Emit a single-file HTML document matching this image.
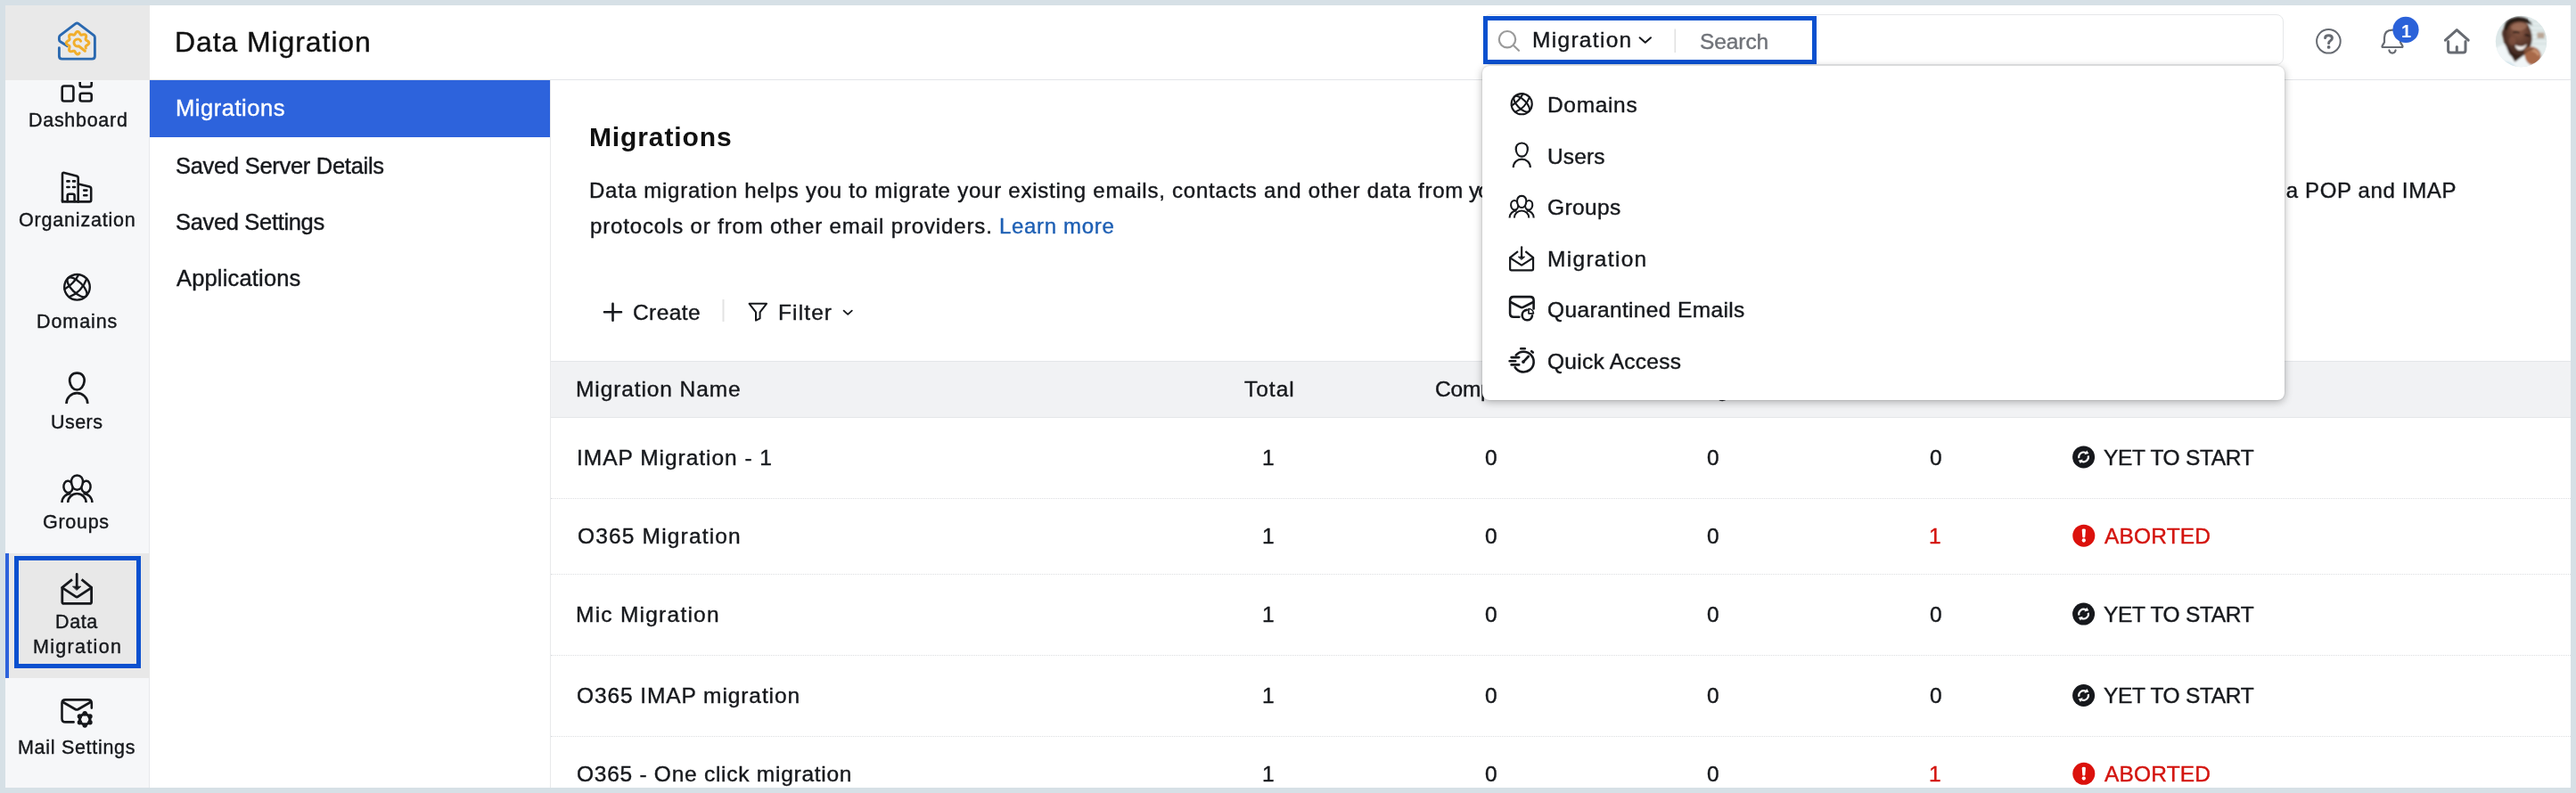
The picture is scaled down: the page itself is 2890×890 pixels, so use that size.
<!DOCTYPE html>
<html lang="en">
<head>
<meta charset="utf-8">
<title>Data Migration</title>
<style>
*{box-sizing:border-box;margin:0;padding:0}
html,body{width:2890px;height:890px;overflow:hidden;background:#fff}
body{position:relative;font-family:"Liberation Sans",sans-serif;color:#16181c}
.a{position:absolute}
.t{position:absolute;white-space:nowrap;line-height:1;will-change:transform;-webkit-text-stroke:0.4px currentColor}
.o{z-index:30}
h1,h2{font-weight:400}
a{text-decoration:none}
svg{position:absolute;overflow:hidden}
.ic{fill:none;stroke:#16181c;stroke-width:2.6;stroke-linecap:round;stroke-linejoin:round}
.fr{position:absolute;background:#d6e0e6;z-index:50}
.sep{left:618px;width:2266px;height:0;border-top:1.5px dotted #dcdee1}
</style>
</head>
<body>
<!-- main area -->
<div class="a" style="left:617px;top:90px;width:1px;height:794px;background:#e8e9eb"></div>
<div class="a" style="left:618px;top:405px;width:2266px;height:64px;background:#f1f2f4;border-top:1.5px solid #e4e6e9;border-bottom:1.5px solid #e4e6e9"></div>
<div class="a sep" style="top:558.5px"></div>
<div class="a sep" style="top:643.5px"></div>
<div class="a sep" style="top:734.5px"></div>
<div class="a sep" style="top:825.5px"></div>
<!-- sub nav -->
<div class="a" style="left:168px;top:90px;width:449px;height:64px;background:#2d63dc"></div>
<!-- header -->
<div class="a" style="left:168px;top:89px;width:2716px;height:1px;background:#e3e5e8"></div>
<div class="a" style="left:1664px;top:16px;width:898px;height:57px;border:1.5px solid #e6e7e9;border-radius:8px;background:#fff"></div>
<div class="a" style="left:1664px;top:18px;width:374px;height:53.6px;border:5.8px solid #0a50cf;background:#fff"></div>
<!-- rail -->
<div class="a" style="left:6px;top:90px;width:162px;height:794px;background:#f6f7f9;border-right:1px solid #e7e9ec"></div>
<div class="a" style="left:6px;top:6px;width:162px;height:84px;background:#e9e9e9"></div>
<div class="a" style="left:6px;top:621px;width:162px;height:140px;background:#e8e8e8"></div>
<div class="a" style="left:6px;top:621px;width:4px;height:140px;background:#2d63dc"></div>
<div class="a" style="left:16px;top:624px;width:142px;height:125.6px;border:5.9px solid #0a50cf"></div>
<svg width="2890" height="890" viewBox="0 0 2890 890" style="left:0;top:0">
<!-- logo -->
<g fill="none" stroke-linecap="round" stroke-linejoin="round">
<path d="M66.4 53.8 V63 Q66.4 66.1 69.5 66.1 H103.3 Q106.4 66.1 106.4 63 V42.2 Q106.4 40.6 105.2 39.7 L88.1 26.7 Q86.4 25.4 84.7 26.7 L67.6 39.7 Q66.4 40.6 66.4 42.2 V44.6 Q66.4 46 67.7 46.8 L75.4 51.6" stroke="#2a69b0" stroke-width="2.9"/>
<path d="M89.11 59.58 L88.65 60.14 L88.14 60.59 L87.59 60.87 L87.01 60.95 L86.44 60.81 L85.90 60.47 L85.40 59.98 L84.97 59.39 L84.58 58.78 L84.23 58.20 L83.89 57.73 L83.53 57.41 L83.12 57.23 L82.63 57.21 L82.05 57.30 L81.40 57.46 L80.70 57.62 L79.97 57.73 L79.27 57.73 L78.65 57.58 L78.15 57.28 L77.79 56.82 L77.60 56.23 L77.56 55.55 L77.64 54.83 L77.79 54.11 L77.95 53.44 L78.07 52.84 L78.09 52.33 L77.96 51.89 L77.68 51.52 L77.25 51.17 L76.71 50.83 L76.10 50.46 L75.50 50.04 L74.97 49.56 L74.58 49.03 L74.37 48.47 L74.38 47.89 L74.60 47.33 L75.00 46.80 L75.54 46.33 L76.15 45.91 L76.75 45.54 L77.29 45.20 L77.71 44.86 L77.98 44.48 L78.09 44.04 L78.07 43.52 L77.94 42.91 L77.78 42.24 L77.63 41.52 L77.56 40.80 L77.61 40.12 L77.82 39.54 L78.18 39.09 L78.70 38.80 L79.33 38.67 L80.03 38.68 L80.75 38.79 L81.46 38.95 L82.10 39.11 L82.67 39.19 L83.15 39.16 L83.56 38.97 L83.92 38.63 L84.26 38.15 L84.61 37.58 L85.00 36.96 L85.44 36.38 L85.94 35.90 L86.48 35.57 L87.06 35.45 L87.63 35.54 L88.18 35.84 L88.69 36.30 L89.14 36.87 L89.53 37.48 L89.89 38.07 L90.23 38.57 L90.58 38.93 L90.98 39.14 L91.45 39.20 L92.01 39.13 L92.64 38.98 L93.34 38.81 L94.06 38.69 L94.77 38.66 L95.41 38.77 L95.95 39.04 L96.34 39.46 L96.57 40.03 L96.64 40.69 L96.59 41.41 L96.45 42.13 L96.28 42.81 L96.15 43.43 L96.10 43.96 L96.19 44.41 L96.44 44.80 L96.84 45.15 L97.36 45.49 L97.96 45.85 L98.57 46.26 L99.12 46.72 L99.55 47.24 L99.80 47.80 L99.84 48.38 L99.67 48.95 L99.30 49.48 L98.79 49.97 L98.19 50.40 L97.58 50.77 L97.02 51.12 L96.57 51.46 L96.27 51.83 L96.12 52.25 L96.12 52.76 L96.22 53.34 L96.39 54.00" stroke="#f1ae2b" stroke-width="3"/>
<path d="M90.6 46.2 A4 4 0 1 0 88.4 51.7 L95.4 57.2" stroke="#f1ae2b" stroke-width="3"/>
</g>
<!-- dashboard (clipped) -->
<g class="ic" stroke-width="3" clip-path="url(#cl1)">
<rect x="69.7" y="96.5" width="12.7" height="17" rx="2.3"/>
<rect x="89.7" y="104.8" width="13" height="8.7" rx="2.3"/>
<rect x="89.7" y="84" width="13" height="13.5" rx="2.3"/>
</g>
<clipPath id="cl1"><rect x="60" y="92" width="60" height="30"/></clipPath>
<!-- organization -->
<g class="ic" stroke-width="2.8">
<path d="M70 226.4 V195.6 Q70 193.4 72.2 193.9 L85.8 197.4 Q87.7 197.9 87.7 199.8 V226.4"/>
<path d="M88 206.4 L100.4 209.6 Q102.2 210.1 102.2 212 V224.4 Q102.2 226.4 100.2 226.4 H72 Q70 226.4 70 224.4"/>
<path d="M75.7 226 V219.7 Q75.7 217.7 77.7 217.7 H81.6 Q83.6 217.7 83.6 219.7 V226"/>
<path d="M75.4 203.4 H77.6 M82 203.4 H84 M75.4 210 H77.6 M82 210 H84 M94.2 213.6 H97.4 M94.2 219.3 H97.4" stroke-width="2.6"/>
</g>
<!-- domains -->
<g class="ic"><g transform="translate(86.5 322.3) scale(1) translate(-86.5 -322.3)" stroke-width="2.40">
<circle cx="86.5" cy="322.3" r="14.3"/>
<ellipse cx="86.5" cy="322.3" rx="14.3" ry="6.1" transform="rotate(45 86.5 322.3)"/>
<path d="M88.3 308.3 Q82.8 318.6 72.5 324.5"/>
<path d="M97.3 312.8 Q91.6 328 77.5 333.3"/>
</g></g>
<!-- users -->
<g class="ic"><g transform="translate(86.4 435) scale(1) translate(-86.4 -435)" stroke-width="2.70" stroke-linecap="butt">
<path d="M86.4 418.6 C92 418.6 95.2 422.6 94.6 428 C94 433.6 90.6 437.5 86.4 437.5 C82.2 437.5 78.8 433.6 78.2 428 C77.6 422.6 80.8 418.6 86.4 418.6 Z"/>
<path d="M74.5 453 A11.9 11.8 0 0 1 98.3 453"/>
</g></g>
<!-- groups -->
<g class="ic"><g transform="translate(86.4 548) scale(1) translate(-86.4 -548)" stroke-width="2.50" stroke-linecap="butt">
<ellipse cx="76.5" cy="546.3" rx="5.1" ry="6.6" transform="rotate(-6 76.5 546.3)"/>
<ellipse cx="96.5" cy="546.3" rx="5.1" ry="6.6" transform="rotate(6 96.5 546.3)"/>
<path d="M69.5 564 A10 10 0 0 1 79.5 554"/>
<path d="M103.4 564 A10 10 0 0 0 93.4 554"/>
<path d="M76.2 564 A10.2 9.9 0 0 1 96.6 564 Z" fill="#f6f7f9" stroke="none"/>
<path d="M76.2 564 A10.2 9.9 0 0 1 96.6 564"/>
<path d="M86.5 533.4 C90.8 533.4 93.4 536.8 92.9 541.4 C92.4 546.2 89.8 549.8 86.5 549.8 C83.2 549.8 80.6 546.2 80.1 541.4 C79.6 536.8 82.2 533.4 86.5 533.4 Z" fill="#f6f7f9"/>
</g></g>
<!-- data migration -->
<g class="ic"><g transform="translate(86.2 661) scale(1) translate(-86.2 -661)" stroke-width="2.80">
<path d="M81 650.4 L69.8 659.3 V675.4 Q69.8 677.4 71.8 677.4 H100.6 Q102.6 677.4 102.6 675.4 V659.3 L91.6 650.4" stroke-linecap="butt"/>
<path d="M69.8 659.6 L85 669.6 Q86.2 670.4 87.4 669.6 L102.6 659.6"/>
<path d="M86.2 644.4 V658" />
<path d="M81.8 658.2 H90.8 L86.3 662.2 Z" fill="#16181c" stroke-width="0.80"/>
</g></g>
<!-- mail settings -->
<g class="ic" stroke-width="2.9">
<path d="M102.8 794.6 V789.4 Q102.8 785.4 98.8 785.4 H73.5 Q69.5 785.4 69.5 789.4 V806.4 Q69.5 810.4 73.5 810.4 H82.6"/>
<path d="M70.6 788 L84.4 796 Q86.1 797 87.8 796 L101.6 788" stroke-width="2.7"/>
<circle cx="95.2" cy="807.4" r="5.7" stroke-width="3.2"/>
<g fill="#16181c" stroke="none"><circle cx="95.20" cy="800.70" r="2.7"/><circle cx="101.00" cy="804.05" r="2.7"/><circle cx="101.00" cy="810.75" r="2.7"/><circle cx="95.20" cy="814.10" r="2.7"/><circle cx="89.40" cy="810.75" r="2.7"/><circle cx="89.40" cy="804.05" r="2.7"/></g>
</g>
<!-- toolbar -->
<g class="ic" stroke-width="2.2">
<path d="M678 350.3 H697 M687.5 340.8 V359.8"/>
<path d="M840.6 340.8 H860 L852.6 350.4 V357.4 L848 359.6 V350.4 Z" stroke-width="2"/>
<path d="M946.6 348.6 L951.2 352.8 L955.8 348.6" stroke-width="1.8"/>
</g>
<rect x="810.5" y="336" width="2" height="25" fill="#e3e3e3"/>
<!-- header: search -->
<g fill="none" stroke="#9a9a9a" stroke-width="2.2" stroke-linecap="round">
<circle cx="1691" cy="44.2" r="9.2"/><path d="M1698 51 L1704 56.8"/>
</g>
<path d="M1839.6 42.2 L1845.8 47.8 L1852 42.2" fill="none" stroke="#16181c" stroke-width="2" stroke-linecap="round" stroke-linejoin="round"/>
<rect x="1878.5" y="32.5" width="1.6" height="26.5" fill="#e2e2e2"/>
<!-- help -->
<g fill="none" stroke="#676b72" stroke-linecap="round" stroke-linejoin="round">
<circle cx="2612.4" cy="46.3" r="13.3" stroke-width="2"/>
<path d="M2608.6 42.6 Q2608.8 39.8 2612.6 39.8 Q2616.4 39.8 2616.4 42.8 Q2616.4 44.6 2614.4 45.8 Q2612.6 46.8 2612.6 48.6" stroke-width="3"/>
<circle cx="2612.6" cy="52.9" r="1.9" fill="#676b72" stroke="none"/>
<!-- bell -->
<path d="M2673.4 53 Q2672.2 53 2672.6 51.6 L2675 47.4 V42.6 Q2675 33.6 2684 33.6 Q2693 33.6 2693 42.6 V47.4 L2695.4 51.6 Q2695.8 53 2694.6 53 Z" stroke-width="2.2"/>
<path d="M2680.4 56.4 Q2681 59.6 2684 59.6 Q2687 59.6 2687.6 56.4" stroke-width="2.2"/>
<!-- home -->
<path d="M2743.4 45.2 L2756.3 33.6 L2769.2 45.2" stroke-width="3"/>
<path d="M2746.6 46.6 V56.4 Q2746.6 59 2749.2 59 H2763.4 Q2766 59 2766 56.4 V46.6" stroke-width="3"/>
<path d="M2756.3 52.6 V58.4" stroke-width="3"/>
</g>
<circle cx="2699" cy="33.4" r="14.6" fill="#2b62d9"/>
<!-- avatar -->
<defs>
<clipPath id="av"><circle cx="2828.5" cy="46.5" r="28.7"/></clipPath>
<filter id="bl" x="-20%" y="-20%" width="140%" height="140%"><feGaussianBlur stdDeviation="0.85"/></filter>
<radialGradient id="skin" cx="0.55" cy="0.35" r="0.7"><stop offset="0" stop-color="#8d5c47"/><stop offset="0.55" stop-color="#5d3a2d"/><stop offset="1" stop-color="#3a241d"/></radialGradient>
</defs>
<g clip-path="url(#av)">
<rect x="2798" y="16" width="62" height="62" fill="#dce7e8"/>
<g filter="url(#bl)">
<rect x="2838" y="18" width="24" height="56" fill="#e4eded"/>
<path d="M2838 24 H2862 M2838 29 H2862 M2838 34 H2862 M2838 39 H2862 M2838 44 H2862 M2838 49 H2862" stroke="#cfdcdc" stroke-width="1.6"/>
<rect x="2846.5" y="36.5" width="8" height="6.5" fill="#b9a594"/>
<path d="M2797 58 Q2803 49 2812 50 L2836 64 L2852 80 H2797 Z" fill="#f1f6f8"/>
<path d="M2806 70 Q2814 66 2822 74 L2820 80 H2806 Z" fill="#d5e6ee"/>
<path d="M2812 54 L2821.5 69.5 L2834 60 Z" fill="#3a261f"/>
<ellipse cx="2824.4" cy="41" rx="16.2" ry="21" transform="rotate(-10 2824.4 41)" fill="url(#skin)"/>
<ellipse cx="2826" cy="30" rx="9" ry="4.5" transform="rotate(-8 2826 30)" fill="#a57560" opacity=".75"/>
<ellipse cx="2818.5" cy="46" rx="4" ry="5" fill="#8a5844" opacity=".6"/>
<path d="M2809.6 33 Q2809 20.4 2825 19 Q2838.6 19.4 2841 28.6 Q2832 23.2 2823 24.4 Q2814.6 25.6 2812.6 34.6 Z" fill="#271a16"/>
<ellipse cx="2809.6" cy="37.6" rx="2.4" ry="4.6" fill="#4c2f25"/>
<path d="M2819.6 36.6 Q2823 34.8 2826.4 36.8 M2832.4 39.4 Q2835.4 38.6 2838 40.8" stroke="#1e1411" stroke-width="2" fill="none"/>
<path d="M2821.6 50.6 Q2828.6 54.6 2835 49.4 Q2832.4 56.8 2825.6 56.2 Q2822.4 55 2821.6 50.6 Z" fill="#f6f1ee"/>
<path d="M2814 52 Q2818 62 2827 63 Q2822 66 2816 62 Q2812.6 58 2814 52 Z" fill="#2e1d18" opacity=".8"/>
<path d="M2832 58 Q2834 51.6 2842 52.6 Q2851.6 55.6 2850.6 65 Q2847 74 2838.6 72.6 Q2832 69 2832 58 Z" fill="#a8694a"/>
<path d="M2840 56 Q2846 57 2848 62" stroke="#cf9a77" stroke-width="2.4" fill="none"/>
<path d="M2832.6 60 Q2835.6 54.6 2842 55.4" stroke="#5a3424" stroke-width="1.5" fill="none"/>
</g>
</g>
<!-- status icons -->
<circle cx="2337.6" cy="512.9" r="12.5" fill="#16181c"/><path d="M2332.43 514.28 A5.35 5.35 0 0 1 2340.28 508.27" fill="none" stroke="#fff" stroke-width="2.1"/><path d="M2341.21 505.46 L2338.41 510.31 L2343.32 508.99 Z" fill="#fff"/><path d="M2342.77 511.52 A5.35 5.35 0 0 1 2334.92 517.53" fill="none" stroke="#fff" stroke-width="2.1"/><path d="M2333.99 520.34 L2336.79 515.49 L2331.88 516.81 Z" fill="#fff"/><circle cx="2337.8" cy="601.2" r="12.5" fill="#db110c"/>
<path d="M2335.7000000000003 594.8000000000001 Q2335.7000000000003 593.6 2337.8 593.6 Q2339.9 593.6 2339.9 594.8000000000001 L2339.3 602.6 Q2339.2000000000003 603.5 2337.8 603.5 Q2336.4 603.5 2336.3 602.6 Z" fill="#fff"/>
<circle cx="2337.8" cy="606.5" r="2.15" fill="#fff"/><circle cx="2337.6" cy="689.1" r="12.5" fill="#16181c"/><path d="M2332.43 690.48 A5.35 5.35 0 0 1 2340.28 684.47" fill="none" stroke="#fff" stroke-width="2.1"/><path d="M2341.21 681.66 L2338.41 686.51 L2343.32 685.19 Z" fill="#fff"/><path d="M2342.77 687.72 A5.35 5.35 0 0 1 2334.92 693.73" fill="none" stroke="#fff" stroke-width="2.1"/><path d="M2333.99 696.54 L2336.79 691.69 L2331.88 693.01 Z" fill="#fff"/><circle cx="2337.6" cy="780.5" r="12.5" fill="#16181c"/><path d="M2332.43 781.88 A5.35 5.35 0 0 1 2340.28 775.87" fill="none" stroke="#fff" stroke-width="2.1"/><path d="M2341.21 773.06 L2338.41 777.91 L2343.32 776.59 Z" fill="#fff"/><path d="M2342.77 779.12 A5.35 5.35 0 0 1 2334.92 785.13" fill="none" stroke="#fff" stroke-width="2.1"/><path d="M2333.99 787.94 L2336.79 783.09 L2331.88 784.41 Z" fill="#fff"/><circle cx="2337.8" cy="868.3" r="12.5" fill="#db110c"/>
<path d="M2335.7000000000003 861.9 Q2335.7000000000003 860.6999999999999 2337.8 860.6999999999999 Q2339.9 860.6999999999999 2339.9 861.9 L2339.3 869.6999999999999 Q2339.2000000000003 870.5999999999999 2337.8 870.5999999999999 Q2336.4 870.5999999999999 2336.3 869.6999999999999 Z" fill="#fff"/>
<circle cx="2337.8" cy="873.5999999999999" r="2.15" fill="#fff"/>
</svg>
<!-- dropdown -->
<div class="a" style="left:1663px;top:73.5px;width:900px;height:375.5px;background:#fff;border-radius:8px;box-shadow:0 2px 10px rgba(0,0,0,.30),0 0 2px rgba(0,0,0,.18);z-index:20"></div>
<svg width="2890" height="890" viewBox="0 0 2890 890" style="left:0;top:0;z-index:30">
<g class="ic"><g transform="translate(1707.2 116.7) scale(0.81) translate(-86.5 -322.3)" stroke-width="2.59">
<circle cx="86.5" cy="322.3" r="14.3"/>
<ellipse cx="86.5" cy="322.3" rx="14.3" ry="6.1" transform="rotate(45 86.5 322.3)"/>
<path d="M88.3 308.3 Q82.8 318.6 72.5 324.5"/>
<path d="M97.3 312.8 Q91.6 328 77.5 333.3"/>
</g></g>
<g class="ic"><g transform="translate(1707.3 173.6) scale(0.8) translate(-86.4 -435)" stroke-width="2.75" stroke-linecap="butt">
<path d="M86.4 418.6 C92 418.6 95.2 422.6 94.6 428 C94 433.6 90.6 437.5 86.4 437.5 C82.2 437.5 78.8 433.6 78.2 428 C77.6 422.6 80.8 418.6 86.4 418.6 Z"/>
<path d="M74.5 453 A11.9 11.8 0 0 1 98.3 453"/>
</g></g>
<g class="ic"><g transform="translate(1707.1 231.6) scale(0.8) translate(-86.4 -548)" stroke-width="2.62" stroke-linecap="butt">
<ellipse cx="76.5" cy="546.3" rx="5.1" ry="6.6" transform="rotate(-6 76.5 546.3)"/>
<ellipse cx="96.5" cy="546.3" rx="5.1" ry="6.6" transform="rotate(6 96.5 546.3)"/>
<path d="M69.5 564 A10 10 0 0 1 79.5 554"/>
<path d="M103.4 564 A10 10 0 0 0 93.4 554"/>
<path d="M76.2 564 A10.2 9.9 0 0 1 96.6 564 Z" fill="#fff" stroke="none"/>
<path d="M76.2 564 A10.2 9.9 0 0 1 96.6 564"/>
<path d="M86.5 533.4 C90.8 533.4 93.4 536.8 92.9 541.4 C92.4 546.2 89.8 549.8 86.5 549.8 C83.2 549.8 80.6 546.2 80.1 541.4 C79.6 536.8 82.2 533.4 86.5 533.4 Z" fill="#fff"/>
</g></g>
<g class="ic"><g transform="translate(1707.1 290.4) scale(0.79) translate(-86.2 -661)" stroke-width="2.78">
<path d="M81 650.4 L69.8 659.3 V675.4 Q69.8 677.4 71.8 677.4 H100.6 Q102.6 677.4 102.6 675.4 V659.3 L91.6 650.4" stroke-linecap="butt"/>
<path d="M69.8 659.6 L85 669.6 Q86.2 670.4 87.4 669.6 L102.6 659.6"/>
<path d="M86.2 644.4 V658" />
<path d="M81.8 658.2 H90.8 L86.3 662.2 Z" fill="#16181c" stroke-width="1.01"/>
</g></g>
<g class="ic" stroke-width="2.2">
<path d="M1720.6 346.4 V337.1 Q1720.6 333.1 1716.6 333.1 H1698.1 Q1694.1 333.1 1694.1 337.1 V351.8 Q1694.1 355.8 1698.1 355.8 H1704.4"/>
<path d="M1694.6 339 L1706 344.8 Q1707.3 345.4 1708.6 344.8 L1720.2 339"/>
<path d="M1712.8 347.9 A5.7 5.7 0 1 0 1719 354.2"/>
<path d="M1715 346.5 V351.8 H1720.4 A5.5 5.5 0 0 0 1715 346.5 Z" stroke-width="1.7"/>
</g>
<g class="ic" stroke-width="2.2">
<path d="M1700.8 398.5 A11.4 11.4 0 1 1 1699.7 412.3"/>
<path d="M1706.2 391.2 H1710.8 M1718.2 394.2 L1719.8 395.5"/>
<path d="M1709 406.1 L1714.8 400"/>
<circle cx="1709" cy="406.1" r="1.9" fill="#16181c" stroke="none"/>
<path d="M1695.6 401.1 H1704.2 M1693.6 405.3 H1700.2 M1695.6 409.4 H1704.2"/>
</g>
</svg>
<div class="t o" style="left:2694.2px;top:24.5px;font-size:20px;font-weight:700;color:#fff;-webkit-text-stroke:0">1</div>
<header>
<h1 class="t" style="left:196.2px;top:31.3px;font-size:32px;letter-spacing:0.896px;color:#111">Data Migration</h1>
<div class="t" style="left:1719.0px;top:32.8px;font-size:24.5px;letter-spacing:1.308px;color:#16181c">Migration</div>
<div class="t" style="left:1907.0px;top:34.8px;font-size:24.5px;letter-spacing:-0.079px;color:#6f7278">Search</div>
</header>
<nav aria-label="Primary">
<a class="t" style="left:31.5px;top:124.5px;font-size:21.5px;letter-spacing:0.711px;color:#16181c">Dashboard</a>
<a class="t" style="left:20.9px;top:237.3px;font-size:21.5px;letter-spacing:0.809px;color:#16181c">Organization</a>
<a class="t" style="left:41.1px;top:350.8px;font-size:21.5px;letter-spacing:0.918px;color:#16181c">Domains</a>
<a class="t" style="left:56.8px;top:463.8px;font-size:21.5px;letter-spacing:0.453px;color:#16181c">Users</a>
<a class="t" style="left:48.4px;top:576.4px;font-size:21.5px;letter-spacing:0.718px;color:#16181c">Groups</a>
<a class="t" style="left:61.5px;top:688.1px;font-size:21.5px;letter-spacing:0.621px;color:#16181c">Data</a>
<a class="t" style="left:37.3px;top:715.8px;font-size:21.5px;letter-spacing:1.305px;color:#16181c">Migration</a>
<a class="t" style="left:20.3px;top:829.2px;font-size:21.5px;letter-spacing:0.700px;color:#16181c">Mail Settings</a>
</nav>
<nav aria-label="Data Migration">
<a class="t" style="left:196.9px;top:109.4px;font-size:25.5px;letter-spacing:0.534px;color:#fff">Migrations</a>
<a class="t" style="left:197.1px;top:174.3px;font-size:25.5px;letter-spacing:-0.288px;color:#16181c">Saved Server Details</a>
<a class="t" style="left:197.1px;top:237.4px;font-size:25.5px;letter-spacing:-0.337px;color:#16181c">Saved Settings</a>
<a class="t" style="left:198.4px;top:300.4px;font-size:25.5px;letter-spacing:0.166px;color:#16181c">Applications</a>
</nav>
<main>
<h2 class="t" style="left:660.8px;top:139.4px;font-size:30px;letter-spacing:0.879px;color:#111;font-weight:700;-webkit-text-stroke:0">Migrations</h2>
<div class="t" style="left:661.3px;top:202.3px;font-size:24px;letter-spacing:0.767px;color:#16181c">Data migration helps you to migrate your existing emails, contacts and other data from</div>
<div class="t" style="left:1647.8px;top:202.3px;font-size:24px;letter-spacing:-1.632px;color:#16181c">your</div>
<div class="t" style="left:2546.4px;top:202.3px;font-size:24px;letter-spacing:0.658px;color:#16181c">via POP and IMAP</div>
<div class="t" style="left:662.1px;top:241.8px;font-size:24px;letter-spacing:0.854px;color:#16181c">protocols or from other email providers.</div>
<a class="t" style="left:1121.0px;top:241.8px;font-size:24px;letter-spacing:0.671px;color:#1d5fb4">Learn more</a>
<div class="t" style="left:710.4px;top:339.0px;font-size:24.5px;letter-spacing:0.430px;color:#16181c">Create</div>
<div class="t" style="left:873.0px;top:339.0px;font-size:24.5px;letter-spacing:1.118px;color:#16181c">Filter</div>
<div class="t" style="left:646.0px;top:425.3px;font-size:24.5px;letter-spacing:0.902px;color:#16181c">Migration Name</div>
<div class="t" style="left:1395.6px;top:425.3px;font-size:24.5px;letter-spacing:0.992px;color:#16181c">Total</div>
<div class="t" style="left:1609.8px;top:425.3px;font-size:24.5px;letter-spacing:-0.207px;color:#16181c">Completed</div>
<div class="t" style="left:1864.4px;top:425.3px;font-size:24.5px;letter-spacing:-0.583px;color:#16181c">In Progress</div>
<div class="t" style="left:2136.4px;top:425.3px;font-size:24.5px;letter-spacing:0.219px;color:#16181c">Failed</div>
<div class="t" style="left:2324.4px;top:425.3px;font-size:24.5px;letter-spacing:-0.401px;color:#16181c">Status</div>
<div class="t" style="left:646.5px;top:502.0px;font-size:24.5px;letter-spacing:0.974px;color:#16181c">IMAP Migration - 1</div>
<div class="t" style="left:647.6px;top:589.8px;font-size:24.5px;letter-spacing:1.169px;color:#16181c">O365 Migration</div>
<div class="t" style="left:646.3px;top:677.5px;font-size:24.5px;letter-spacing:1.245px;color:#16181c">Mic Migration</div>
<div class="t" style="left:646.9px;top:769.0px;font-size:24.5px;letter-spacing:0.908px;color:#16181c">O365 IMAP migration</div>
<div class="t" style="left:646.9px;top:856.8px;font-size:24.5px;letter-spacing:0.738px;color:#16181c">O365 - One click migration</div>
<div class="t" style="left:2360.2px;top:502.2px;font-size:24.5px;letter-spacing:-0.296px;color:#16181c">YET TO START</div>
<div class="t" style="left:2360.7px;top:589.8px;font-size:24.5px;letter-spacing:0.176px;color:#d3140f">ABORTED</div>
<div class="t" style="left:2360.2px;top:677.7px;font-size:24.5px;letter-spacing:-0.296px;color:#16181c">YET TO START</div>
<div class="t" style="left:2360.2px;top:769.2px;font-size:24.5px;letter-spacing:-0.296px;color:#16181c">YET TO START</div>
<div class="t" style="left:2360.7px;top:857.0px;font-size:24.5px;letter-spacing:0.176px;color:#d3140f">ABORTED</div>
<div class="t" style="left:1416.0px;top:501.8px;font-size:24.5px;color:#16181c">1</div>
<div class="t" style="left:1665.9px;top:501.8px;font-size:24.5px;color:#16181c">0</div>
<div class="t" style="left:1915.3px;top:501.8px;font-size:24.5px;color:#16181c">0</div>
<div class="t" style="left:2164.8px;top:501.8px;font-size:24.5px;color:#16181c">0</div>
<div class="t" style="left:1416.0px;top:589.6px;font-size:24.5px;color:#16181c">1</div>
<div class="t" style="left:1665.9px;top:589.6px;font-size:24.5px;color:#16181c">0</div>
<div class="t" style="left:1915.3px;top:589.6px;font-size:24.5px;color:#16181c">0</div>
<div class="t" style="left:2164.3px;top:589.6px;font-size:24.5px;color:#d3140f">1</div>
<div class="t" style="left:1416.0px;top:677.5px;font-size:24.5px;color:#16181c">1</div>
<div class="t" style="left:1665.9px;top:677.5px;font-size:24.5px;color:#16181c">0</div>
<div class="t" style="left:1915.3px;top:677.5px;font-size:24.5px;color:#16181c">0</div>
<div class="t" style="left:2164.8px;top:677.5px;font-size:24.5px;color:#16181c">0</div>
<div class="t" style="left:1416.0px;top:769.0px;font-size:24.5px;color:#16181c">1</div>
<div class="t" style="left:1665.9px;top:769.0px;font-size:24.5px;color:#16181c">0</div>
<div class="t" style="left:1915.3px;top:769.0px;font-size:24.5px;color:#16181c">0</div>
<div class="t" style="left:2164.8px;top:769.0px;font-size:24.5px;color:#16181c">0</div>
<div class="t" style="left:1416.0px;top:856.8px;font-size:24.5px;color:#16181c">1</div>
<div class="t" style="left:1665.9px;top:856.8px;font-size:24.5px;color:#16181c">0</div>
<div class="t" style="left:1915.3px;top:856.8px;font-size:24.5px;color:#16181c">0</div>
<div class="t" style="left:2164.3px;top:856.8px;font-size:24.5px;color:#d3140f">1</div>
</main>
<div role="listbox" aria-label="Search in">
<span class="t o" style="left:1735.6px;top:106.0px;font-size:24.5px;letter-spacing:0.660px;color:#16181c">Domains</span>
<span class="t o" style="left:1735.7px;top:163.5px;font-size:24.5px;letter-spacing:0.109px;color:#16181c">Users</span>
<span class="t o" style="left:1736.1px;top:220.9px;font-size:24.5px;letter-spacing:0.361px;color:#16181c">Groups</span>
<span class="t o" style="left:1735.6px;top:278.7px;font-size:24.5px;letter-spacing:1.303px;color:#16181c">Migration</span>
<span class="t o" style="left:1736.2px;top:336.3px;font-size:24.5px;letter-spacing:0.360px;color:#16181c">Quarantined Emails</span>
<span class="t o" style="left:1736.2px;top:393.9px;font-size:24.5px;letter-spacing:0.270px;color:#16181c">Quick Access</span>
</div>
<!-- frame -->
<div class="fr" style="left:0;top:0;width:2890px;height:6px"></div>
<div class="fr" style="left:0;top:884px;width:2890px;height:6px"></div>
<div class="fr" style="left:0;top:0;width:6px;height:890px"></div>
<div class="fr" style="left:2884px;top:0;width:6px;height:890px"></div>
</body>
</html>
